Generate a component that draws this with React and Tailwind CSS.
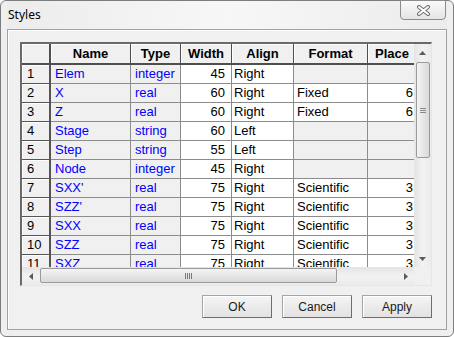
import React from "react";

const rows = [
  ["1", "Elem", "integer", "45", "Right", "", ""],
  ["2", "X", "real", "60", "Right", "Fixed", "6"],
  ["3", "Z", "real", "60", "Right", "Fixed", "6"],
  ["4", "Stage", "string", "60", "Left", "", ""],
  ["5", "Step", "string", "55", "Left", "", ""],
  ["6", "Node", "integer", "45", "Right", "", ""],
  ["7", "SXX'", "real", "75", "Right", "Scientific", "3"],
  ["8", "SZZ'", "real", "75", "Right", "Scientific", "3"],
  ["9", "SXX", "real", "75", "Right", "Scientific", "3"],
  ["10", "SZZ", "real", "75", "Right", "Scientific", "3"],
  ["11", "SXZ", "real", "75", "Right", "Scientific", "3"],
  ["12", "SYY", "real", "75", "Right", "Scientific", "3"],
];

const headers = [
  { label: "", cls: "w-[29px] border-r-2" },
  { label: "Name", cls: "w-[80px] border-r" },
  { label: "Type", cls: "w-[50px] border-r" },
  { label: "Width", cls: "w-[51px] border-r" },
  { label: "Align", cls: "w-[62px] border-r" },
  { label: "Format", cls: "w-[74px] border-r" },
  { label: "Place", cls: "w-[49px] border-r" },
];

const line = "border-r border-b border-[#8c8c8c]";

function Tri({ dir }) {
  const pts = {
    up: "0,4 3.5,0 7,4",
    down: "0,0 7,0 3.5,4",
    left: "4,0 4,7 0,3.5",
    right: "0,0 0,7 4,3.5",
  }[dir];
  const vertical = dir === "up" || dir === "down";
  return (
    <svg width={vertical ? 7 : 4} height={vertical ? 4 : 7}>
      <polygon points={pts} fill="#5a5a5a" />
    </svg>
  );
}

function DataRow({ r }) {
  const empty = r[5] === "";
  const tail = empty ? "bg-[#f0f0f0]" : "bg-white";
  return (
    <div className="flex h-[19px] shrink-0 leading-[18px]">
      <div className="w-[29px] shrink-0 bg-[#f0f0f0] border-r-2 border-b border-[#555555] pl-[5px] shadow-[inset_1px_1px_0_#ffffff]">
        {r[0]}
      </div>
      <div className={`w-[80px] shrink-0 bg-[#f0f0f0] text-[#0000ff] pl-[4px] ${line}`}>{r[1]}</div>
      <div className={`w-[50px] shrink-0 bg-[#f0f0f0] text-[#0000ff] pl-[4px] ${line}`}>{r[2]}</div>
      <div className={`w-[51px] shrink-0 bg-white text-right pr-[6px] ${line}`}>{r[3]}</div>
      <div className={`w-[62px] shrink-0 bg-white pl-[2px] ${line}`}>{r[4]}</div>
      <div className={`w-[74px] shrink-0 pl-[3px] ${tail} ${line}`}>{r[5]}</div>
      <div className={`w-[49px] shrink-0 text-right pr-[3px] ${tail} ${line}`}>{r[6]}</div>
    </div>
  );
}

function VScroll() {
  return (
    <div className="w-[17px] shrink-0 flex flex-col bg-gradient-to-r from-[#e4e4e4] via-[#f2f2f2] to-[#ebebeb]">
      <div className="h-[17px] flex items-center justify-center">
        <Tri dir="up" />
      </div>
      <div className="ml-[2px] mr-[1px] mt-[1px] h-[96px] rounded-[2px] border border-[#9a9a9a] bg-gradient-to-r from-[#f4f4f4] to-[#d9d9d9] flex flex-col items-center justify-center gap-[1px]">
        <div className="w-[6px] h-[1px] bg-[#8a8a8a]" />
        <div className="w-[6px] h-[1px] bg-[#8a8a8a]" />
        <div className="w-[6px] h-[1px] bg-[#8a8a8a]" />
      </div>
      <div className="flex-1" />
      <div className="h-[17px] flex items-center justify-center">
        <Tri dir="down" />
      </div>
    </div>
  );
}

function HScroll() {
  return (
    <div className="flex h-[18px] shrink-0">
      <div className="w-[392px] flex bg-gradient-to-b from-[#e4e4e4] via-[#f2f2f2] to-[#ebebeb]">
        <div className="w-[17px] flex items-center justify-center">
          <Tri dir="left" />
        </div>
        <div className="ml-[1px] mt-[1px] mb-[2px] w-[297px] rounded-[2px] border border-[#9a9a9a] bg-gradient-to-b from-[#f4f4f4] to-[#d9d9d9] flex items-center justify-center gap-[1px]">
          <div className="w-[1px] h-[6px] bg-[#7a7a7a]" />
          <div className="w-[1px] h-[6px] bg-[#7a7a7a]" />
          <div className="w-[1px] h-[6px] bg-[#7a7a7a]" />
          <div className="w-[1px] h-[6px] bg-[#7a7a7a]" />
        </div>
        <div className="flex-1" />
        <div className="w-[17px] flex items-center justify-center">
          <Tri dir="right" />
        </div>
      </div>
      <div className="w-[17px] bg-[#f0f0f0]" />
    </div>
  );
}

function Button({ children }) {
  return (
    <button className="w-[70px] h-[23px] border border-[#a5a5a5] border-r-[#6e6e6e] border-b-[#6e6e6e] bg-gradient-to-b from-[#f5f5f5] to-[#e2e2e2] shadow-[inset_1px_1px_0_#ffffff] text-[12px] text-[#1a1a1a] leading-none">
      {children}
    </button>
  );
}

export default function App() {
  return (
    <div className="w-[454px] h-[337px] bg-white" style={{ fontFamily: '"Liberation Sans", Arial, sans-serif' }}>
      <div className="w-full h-full rounded-[6px] border border-[#7d7d7d] bg-[#efefef] flex flex-col px-[6px] pb-[6px]">
        <div className="h-[28px] shrink-0 flex items-start justify-between bg-gradient-to-r from-[#ececec] via-[#f7f7f7] to-[#ececec]">
          <div className="pl-[1px] pt-[5px] text-[12px] text-black" style={{ fontFamily: '"Noto Sans", sans-serif' }}>
            Styles
          </div>
          <div className="-mt-[1px] mr-[1px] w-[46px] h-[20px] rounded-b-[4px] border border-[#8c8c8c] bg-gradient-to-b from-[#fbfbfb] to-[#e4e4e4] flex items-center justify-center">
            <svg width="15" height="11" viewBox="0 0 15 11">
              <path d="M3 2 L12 9 M12 2 L3 9" stroke="#6e6e6e" strokeWidth="4" strokeLinecap="round" />
              <path d="M3 2 L12 9 M12 2 L3 9" stroke="#ffffff" strokeWidth="2" strokeLinecap="round" />
            </svg>
          </div>
        </div>
        <div className="flex-1 border border-[#a2a2a2] shadow-[inset_1px_1px_0_#ffffff] bg-[#f0f0f0] flex flex-col">
          <div className="ml-[12px] mt-[12px] w-[412px] h-[244px] border-t-2 border-l-2 border-[#6a6a6a] border-r border-b border-r-[#e6e6e6] border-b-[#e6e6e6] bg-white flex flex-col text-[13px] text-black">
            <div className="flex h-[223px] shrink-0">
              <div className="w-[392px] overflow-hidden flex flex-col">
                <div className="flex h-[21px] shrink-0 border-b-2 border-[#4e4e4e]">
                  {headers.map((h, i) => (
                    <div
                      key={i}
                      className={`${h.cls} shrink-0 border-[#4e4e4e] bg-[#f0f0f0] shadow-[inset_1px_1px_0_#ffffff] font-bold text-center leading-[19px]`}
                    >
                      {h.label}
                    </div>
                  ))}
                </div>
                {rows.map((r) => (
                  <DataRow key={r[0]} r={r} />
                ))}
              </div>
              <VScroll />
            </div>
            <HScroll />
          </div>
          <div className="mt-[9px] mr-[14px] flex justify-end gap-[10px]">
            <Button>OK</Button>
            <Button>Cancel</Button>
            <Button>Apply</Button>
          </div>
        </div>
      </div>
    </div>
  );
}
